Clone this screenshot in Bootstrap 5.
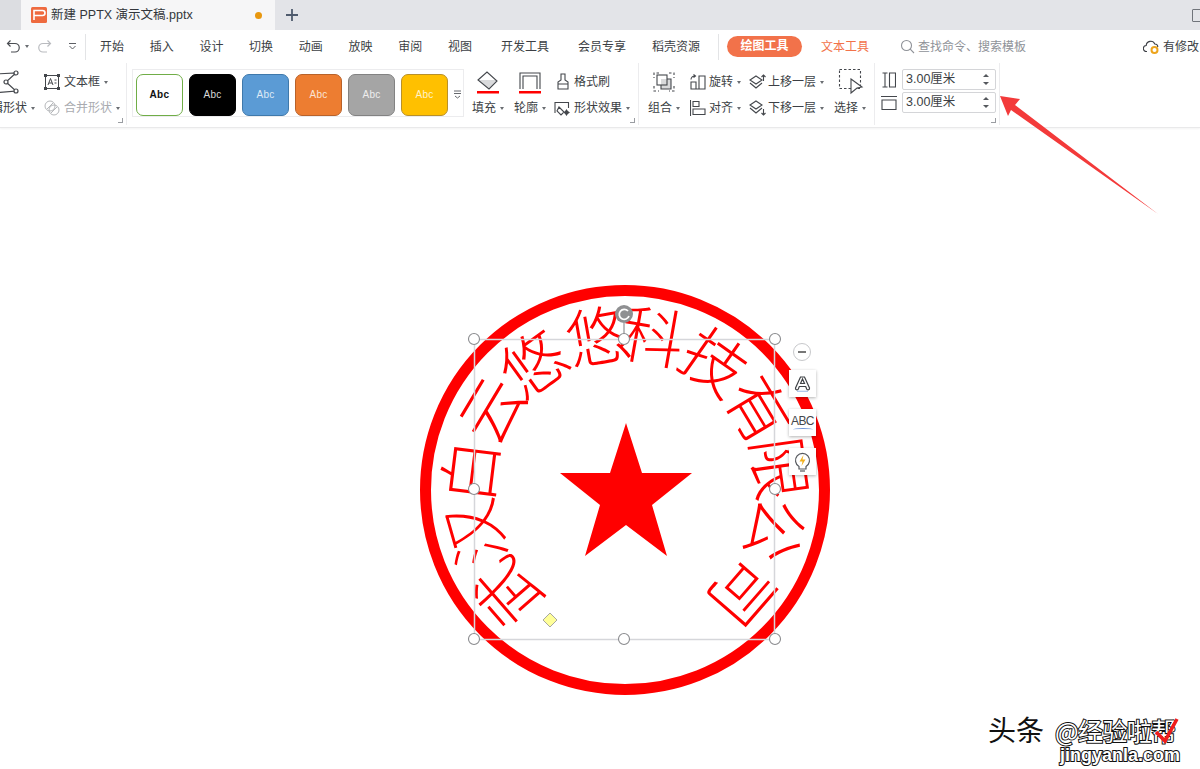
<!DOCTYPE html>
<html lang="zh-CN">
<head>
    <meta charset="UTF-8" />
    <title>新建 PPTX 演示文稿.pptx</title>
    <meta name="viewport" content="width=device-width, initial-scale=1.0" />
    <link href="https://cdn.jsdelivr.net/npm/bootstrap@5.3.0/dist/css/bootstrap.min.css" rel="stylesheet">
    <style>
        body {
            width: 1200px;
            height: 769px;
            overflow: hidden;
            background: #fff;
            color: #3c3f45;
            font-family: "Liberation Sans", "Noto Sans CJK SC", sans-serif;
            font-size: 12px;
            position: relative;
        }
        /* title bar */
        .tabbar { height: 30px; background: #e3e4e8; }
        .tab-stub { width: 21px; background: #dcdde1; }
        .doc-tab { width: 254px; background: #f6f6f7; padding-left: 10px; font-size: 12.5px; color: #33363b; gap: 4px; }
        .doc-dot { width: 7px; height: 7px; border-radius: 50%; background: #e8970f; margin-left: auto; margin-right: 13px; }
        .win-box { width: 14px; height: 13px; border: 1px solid #70747a; margin-left: auto; margin-right: -6px; border-radius: 1px; }
        .plus-btn { margin-left: 10px; }

        /* menu row */
        .menurow { height: 33px; padding-left: 6px; }
        .quick { width: 79px; }
        .sep-v { width: 1px; background: #e3e4e6; height: 26px; }
        .sep-pill { margin-left: 18px; }
        .menuitem { margin-left: 25.7px; white-space: nowrap; font-size: 12px; line-height: 1; }
        .menuitem.m-first { margin-left: 14px; }
        .menuitem.m-wide { margin-left: 29px; }
        .menuitem.m-mid { margin-left: 26px; }
        .pill-tool { background: #f2724a; color: #fff; font-weight: 700; width: 75px; height: 21px; border-radius: 11px; margin-left: 8px; line-height: 21px; text-align: center; }
        .menuitem.text-tool { color: #f2724a; margin-left: 19px; }
        .cmd-search { margin-left: 31px; color: #8f9298; gap: 3px; }
        .save-state { margin-left: auto; gap: 4px; margin-right: 1px; white-space: nowrap; }

        /* ribbon */
        .ribbon { height: 65px; border-bottom: 1px solid #e9e9ea; box-shadow: 0 1px 2px rgba(0, 0, 0, .05); position: relative; }
        .rgroup { position: relative; height: 62px; border-right: 1px solid #ececee; flex: none; }
        .launch { position: absolute; right: 3px; bottom: 2px; width: 5px; height: 5px; border-right: 1px solid #9a9da2; border-bottom: 1px solid #9a9da2; }
        .caret-d { display: inline-block; width: 0; height: 0; border-left: 2.5px solid transparent; border-right: 2.5px solid transparent; border-top: 3px solid #6a6d72; margin-left: 4px; vertical-align: middle; }
        .rstack { padding-top: 7px; gap: 2px; }
        .rline { height: 24px; white-space: nowrap; gap: 4px; }
        .rline-tight { gap: 3px; }
        .rline-up { gap: 2px; }
        .nudge-l { margin-left: -2px; }
        .muted-line { color: #a9abb0; }
        .g-shape { width: 127px; }
        .g-shape .col-a { width: 44px; margin-left: -21px; flex: none; }
        .g-shape .col-b { flex: none; margin-left: 21px; }
        .shape-ico { margin-left: 19px; }
        .g-gallery { width: 512px; }
        .gallery-box { width: 332px; height: 48px; margin: 6px 0 0 5px; border: 1px solid #ececee; padding: 4px 0 0 3px; gap: 6px; flex: none; }
        .swatch { width: 47px; height: 42px; border-radius: 7px; border: 1.5px solid; font-size: 10px; letter-spacing: .3px; text-align: center; line-height: 39px; flex: none; }
        .sw-white { background: #fff; border-color: #70ad47; color: #111; font-weight: 600; }
        .sw-black { background: #000; border-color: #000; color: #d8d8d8; }
        .sw-blue { background: #5b9bd5; border-color: #3f79ab; color: #dfeaf5; }
        .sw-orange { background: #ed7d31; border-color: #b8622a; color: #fbe4d4; }
        .sw-gray { background: #a5a5a5; border-color: #828282; color: #eee; }
        .sw-gold { background: #ffc000; border-color: #b8902a; color: #fff3cc; }
        .gallery-more { width: 17px; margin-left: -3px; height: 40px; }
        .stack-btn { width: 42px; flex: none; }
        .stack-btn.s-group { width: 42px; }
        .stack-btn .ico { height: 37px; }
        .stack-btn .lbl { line-height: 16px; white-space: nowrap; }
        .g-fill { padding-left: 8px; }
        .g-arrange { width: 236px; padding-left: 9px; }
        .arr-a { margin-right: 8px; }
        .arr-b { margin-right: 10px; }
        .g-size { width: 125px; padding: 5px 0 0 7px; }
        .size-row { height: 23px; gap: 6px; }
        .size-wide { margin: 0 -1px; }
        .size-field { width: 94px; height: 21px; border: 1px solid #d4d5d8; border-radius: 2px; padding: 0 0 0 3px; font-size: 12.5px; line-height: 19px; position: relative; }
        .spin-up, .spin-dn { position: absolute; right: 6px; width: 0; height: 0; border-left: 3px solid transparent; border-right: 3px solid transparent; }
        .spin-up { top: 4px; border-bottom: 3px solid #55585d; }
        .spin-dn { bottom: 4px; border-top: 3px solid #55585d; }

        /* slide area */
        .stage { position: relative; height: 641px; }
        .stage-svg { display: block; }
        .stamp-text { font-family: "Noto Sans CJK SC", sans-serif; font-size: 64px; fill: #f00; text-anchor: middle; font-weight: 300; }
        .float-tools { position: absolute; left: 789px; top: 215px; gap: 12px; }
        .float-minus { width: 18px; height: 18px; border-radius: 50%; border: 1px solid #c7c8cb; background: #fff; margin-left: 4px; margin-bottom: -3px; position: relative; }
        .float-minus::after { content: ""; position: absolute; left: 4px; right: 4px; top: 7px; height: 2px; background: #777; }
        .float-btn { width: 27px; height: 27px; background: #fff; box-shadow: 0 1px 3px rgba(0, 0, 0, .3); }
        .abc-mark { font-size: 12px; line-height: 13px; color: #44474c; letter-spacing: -.6px; }
        .abc-wave { display: block; width: 20px; height: 3px; border-top: 1px solid #6e94d8; border-radius: 50% 50% 0 0; }
        .wm-head { position: absolute; left: 988px; top: 584px; font-size: 28px; line-height: 34px; font-family: "Noto Sans CJK SC", sans-serif; color: #111; white-space: nowrap; }
        .wm-site { position: absolute; left: 1055px; top: 586px; font-size: 25px; line-height: 32px; color: #fff; -webkit-text-stroke: 2px #111; paint-order: stroke fill; white-space: nowrap; font-family: "Noto Sans CJK SC", sans-serif; letter-spacing: -.6px; }
        .wm-url { position: absolute; left: 1060px; top: 617px; font-size: 18px; line-height: 20px; font-weight: 700; color: #fff; -webkit-text-stroke: 2px #111; paint-order: stroke fill; white-space: nowrap; font-family: "Liberation Sans", sans-serif; }
        .wm-check { position: absolute; left: 1154px; top: 589px; }
        .call-arrow { position: absolute; left: 0; top: 0; pointer-events: none; }
        svg { flex: none; }
    </style>
</head>
<body>

<div class="tabbar d-flex">
    <div class="tab-stub"></div>
    <div class="doc-tab d-flex align-items-center">
        <svg width="16" height="16" viewBox="0 0 16 16"><rect width="16" height="16" rx="1.500" fill="#ee6a3f"/><path d="M3 13V3.500h8.500a2.500 2.500 0 0 1 0 5H3" fill="none" stroke="#fff" stroke-width="1.600"/></svg>
        <span>新建 PPTX 演示文稿.pptx</span>
        <span class="doc-dot"></span>
    </div>
    <div class="plus-btn d-flex align-items-center">
        <svg width="14" height="14" viewBox="0 0 14 14"><path d="M7 1v12M1 7h12" stroke="#4f5b6e" stroke-width="1.800"/></svg>
    </div>
    <div class="win-box align-self-center"></div>
</div>

<div class="menurow d-flex align-items-center">
    <div class="quick d-flex align-items-center">
        <svg width="15" height="15" viewBox="0 0 15 15" fill="none" stroke="#4a4d52" stroke-width="1.200"><path d="M4.500 1.500 1.500 4.500l3 3M1.500 4.500h7.500a4 4 0 0 1 0 8.500H5"/></svg>
        <span class="caret-d"></span>
        <svg class="ms-2" width="15" height="15" viewBox="0 0 15 15" fill="none" stroke="#b9bbbf" stroke-width="1.200"><path d="M10.500 1.500l3 3-3 3M13.500 4.500H6a4 4 0 0 0 0 8.500h4"/></svg>
        <svg class="ms-3" width="9" height="9" viewBox="0 0 9 9" fill="none" stroke="#5c5f64"><path d="M1 1.500h7M1.500 4l3 3 3-3"/></svg>
    </div>
    <div class="sep-v"></div>
    <span class="menuitem m-first">开始</span>
    <span class="menuitem">插入</span>
    <span class="menuitem">设计</span>
    <span class="menuitem">切换</span>
    <span class="menuitem">动画</span>
    <span class="menuitem">放映</span>
    <span class="menuitem">审阅</span>
    <span class="menuitem">视图</span>
    <span class="menuitem m-wide">开发工具</span>
    <span class="menuitem m-wide">会员专享</span>
    <span class="menuitem m-mid">稻壳资源</span>
    <div class="sep-v sep-pill"></div>
    <span class="pill-tool">绘图工具</span>
    <span class="menuitem text-tool">文本工具</span>
    <div class="cmd-search d-flex align-items-center">
        <svg width="15" height="15" viewBox="0 0 15 15" fill="none" stroke="#8f9298" stroke-width="1.100"><circle cx="6.500" cy="6.500" r="5"/><path d="M10.200 10.200 14 14"/></svg>
        <span>查找命令、搜索模板</span>
    </div>
    <div class="save-state d-flex align-items-center">
        <svg width="16" height="14" viewBox="0 0 16 14" fill="none"><path d="M4 11.500H3.500a3 3 0 0 1-.300-6A4.500 4.500 0 0 1 11.800 4a3 3 0 0 1 3 3" stroke="#3c3f45" stroke-width="1.100"/><circle cx="11.500" cy="10" r="3" stroke="#eda41c" stroke-width="2"/></svg>
        <span>有修改</span>
    </div>
</div>

<div class="ribbon d-flex">
    <!-- shape group, cut off by the window's left edge -->
    <div class="rgroup g-shape d-flex">
        <div class="col-a rstack d-flex flex-column">
            <div class="rline d-flex align-items-center">
                <svg class="shape-ico" width="24" height="24" viewBox="0 0 24 24" fill="none" stroke="#44474c" stroke-width="1.200"><path d="M-4 4 18 3 8 12l10 9L-4 23"/><circle cx="18" cy="3" r="2" fill="#fff"/><circle cx="8" cy="12" r="2" fill="#fff"/><circle cx="18" cy="21" r="2" fill="#fff"/></svg>
            </div>
            <div class="rline d-flex align-items-center"><span>编辑形状<span class="caret-d"></span></span></div>
        </div>
        <div class="col-b rstack d-flex flex-column">
            <div class="rline d-flex align-items-center">
                <svg width="16" height="16" viewBox="0 0 16 16" fill="none" stroke="#44474c"><rect x="1.500" y="1.500" width="13" height="13"/><rect x=".5" y=".5" width="2" height="2" fill="#44474c"/><rect x="13.500" y=".5" width="2" height="2" fill="#44474c"/><rect x=".5" y="13.500" width="2" height="2" fill="#44474c"/><rect x="13.500" y="13.500" width="2" height="2" fill="#44474c"/><path d="M4 11 6.500 4.500 9 11M5 9h3M10.500 6h2M10.500 9h2"/></svg>
                <span>文本框<span class="caret-d"></span></span>
            </div>
            <div class="rline d-flex align-items-center muted-line">
                <svg width="16" height="16" viewBox="0 0 16 16" fill="none" stroke="#b5b7ba"><circle cx="6" cy="6" r="5"/><circle cx="10" cy="10" r="5"/><path d="M3 9l6-6M7 13l6-6"/></svg>
                <span>合并形状<span class="caret-d"></span></span>
            </div>
        </div>
        <span class="launch"></span>
    </div>

    <div class="rgroup g-gallery d-flex">
        <div class="gallery-box d-flex align-items-start">
            <div class="swatch sw-white">Abc</div>
            <div class="swatch sw-black">Abc</div>
            <div class="swatch sw-blue">Abc</div>
            <div class="swatch sw-orange">Abc</div>
            <div class="swatch sw-gray">Abc</div>
            <div class="swatch sw-gold">Abc</div>
            <div class="gallery-more d-flex justify-content-center align-items-center">
                <svg width="7" height="9" viewBox="0 0 7 9" fill="none" stroke="#66696e"><path d="M0 1h7M0 3.500h7M1 6l2.500 2L6 6"/></svg>
            </div>
        </div>
        <div class="g-fill d-flex">
            <div class="stack-btn">
                <div class="ico d-flex align-items-center ps-1">
                    <svg width="24" height="26" viewBox="0 0 24 26" fill="none" stroke="#44474c" stroke-width="1.100"><path d="M2 11h19l-8 8z" fill="#d9dadc" stroke="none"/><path d="M2 11 11 3l10 9-8 8z"/><rect x="1" y="22" width="22" height="2.500" fill="#f00" stroke="none"/></svg>
                </div>
                <div class="lbl">填充<span class="caret-d"></span></div>
            </div>
            <div class="stack-btn">
                <div class="ico d-flex align-items-center ps-1">
                    <svg width="24" height="26" viewBox="0 0 24 26" fill="none" stroke="#44474c" stroke-width="1.100"><path d="M2 20V4h20v16M5 20V7h14v13"/><rect x="1" y="22" width="22" height="2.500" fill="#f00" stroke="none"/></svg>
                </div>
                <div class="lbl">轮廓<span class="caret-d"></span></div>
            </div>
            <div class="rstack d-flex flex-column">
                <div class="rline d-flex align-items-center">
                    <svg width="14" height="18" viewBox="0 0 14 18" fill="none" stroke="#44474c" stroke-width="1.100"><path d="M5 1h4v6l3 2v7H2V9l3-2zM2 11h10"/></svg>
                    <span>格式刷</span>
                </div>
                <div class="rline d-flex align-items-center">
                    <svg class="nudge-l" width="16" height="15" viewBox="0 0 16 15" fill="none" stroke="#44474c" stroke-width="1.100"><path d="M1 12V1.500h13.500V7M5 6l5 5-3 3-4-4z"/><path d="M12.500 9l1 1.500 1.500 1-1.500 1-1 1.500-1-1.500-1-1 1-1z" fill="#44474c"/></svg>
                    <span>形状效果<span class="caret-d"></span></span>
                </div>
            </div>
        </div>
        <span class="launch"></span>
    </div>

    <div class="rgroup g-arrange d-flex">
        <div class="stack-btn s-group">
            <div class="ico d-flex align-items-center ps-1">
                <svg width="24" height="24" viewBox="0 0 24 24" fill="none" stroke="#44474c" stroke-width="1.100"><path d="M7 3H2v5M17 3h5v5M2 16v5h5M22 16v5h-5" stroke-dasharray="2.500 2"/><rect x="9" y="9" width="10" height="10" fill="#d9dadc" stroke="none"/><rect x="5" y="5" width="10" height="10"/><path d="M15 9h4v10H9v-4"/></svg>
            </div>
            <div class="lbl">组合<span class="caret-d"></span></div>
        </div>
        <div class="arr-a rstack d-flex flex-column">
            <div class="rline rline-tight d-flex align-items-center">
                <svg width="16" height="16" viewBox="0 0 16 16" fill="none" stroke="#44474c" stroke-width="1.100"><path d="M1 15V8h5v7zM9 15V2h6v13zM6 15h3M1 5.500A3.500 3.500 0 0 1 5 2M3.500 .5 5.500 2 3.500 3.500"/></svg>
                <span>旋转<span class="caret-d"></span></span>
            </div>
            <div class="rline rline-tight d-flex align-items-center">
                <svg width="16" height="16" viewBox="0 0 16 16" fill="none" stroke="#44474c" stroke-width="1.100"><path d="M.5 0v16M3 1.500h6v5H3zM3 9h12v5.500H3z"/></svg>
                <span>对齐<span class="caret-d"></span></span>
            </div>
        </div>
        <div class="arr-b rstack d-flex flex-column">
            <div class="rline rline-up d-flex align-items-center">
                <svg width="17" height="16" viewBox="0 0 17 16" fill="none" stroke="#44474c" stroke-width="1.100"><path d="M7 2 13 6 7 10 1 6zM1 9l6 5 6-5M14.500 7V1M12.500 3l2-2 2 2"/></svg>
                <span>上移一层<span class="caret-d"></span></span>
            </div>
            <div class="rline rline-up d-flex align-items-center">
                <svg width="17" height="16" viewBox="0 0 17 16" fill="none" stroke="#44474c" stroke-width="1.100"><path d="M7 1 13 5 7 9 1 5zM1 8l6 5 6-5M14.500 9v6M12.500 13l2 2 2-2"/></svg>
                <span>下移一层<span class="caret-d"></span></span>
            </div>
        </div>
        <div class="stack-btn">
            <div class="ico d-flex align-items-center ps-1">
                <svg width="26" height="27" viewBox="0 0 26 27" fill="none" stroke="#44474c" stroke-width="1.100"><rect x="1.500" y="1.500" width="21" height="19" stroke-dasharray="2.500 2"/><path d="M13 11l11 8-5 1-6 5z" fill="#fff"/></svg>
            </div>
            <div class="lbl">选择<span class="caret-d"></span></div>
        </div>
    </div>

    <div class="rgroup g-size">
        <div class="size-row d-flex align-items-center">
            <svg width="14" height="16" viewBox="0 0 14 16" fill="none" stroke="#44474c" stroke-width="1.100"><path d="M.5 1h5M3 1v14M.5 15h5M7.500 1h6v14h-6z"/></svg>
            <div class="size-field">3.00厘米<span class="spin-up"></span><span class="spin-dn"></span></div>
        </div>
        <div class="size-row d-flex align-items-center">
            <svg class="size-wide" width="16" height="14" viewBox="0 0 16 14" fill="none" stroke="#44474c" stroke-width="1.100"><path d="M0 .5h16M1 4h14v9.500H1z"/></svg>
            <div class="size-field">3.00厘米<span class="spin-up"></span><span class="spin-dn"></span></div>
        </div>
        <span class="launch"></span>
    </div>
</div>

<div class="stage">
    <svg class="stage-svg" width="1200" height="641" viewBox="0 128 1200 641">
        <circle cx="625" cy="490" r="199.500" fill="none" stroke="#f00" stroke-width="11"/>
        <polygon fill="#f00" points="626,423 642,473 692,473 652,505 667,556 626,525 585,556 600,505 560,473 610,473"/>
        <g id="stamp-chars"></g>
        <rect x="474.500" y="339.500" width="300" height="300" fill="none" stroke="#d5d6da" stroke-width="1.500"/>
        <path d="M624 323v16" stroke="#a6a7aa" stroke-width="1.500"/>
        <g fill="#fff" stroke="#8a8b8e" stroke-width="1.100">
            <circle cx="474" cy="339" r="5.500"/><circle cx="624" cy="339" r="5.500"/><circle cx="775" cy="339" r="5.500"/>
            <circle cx="474" cy="489" r="5.500"/><circle cx="775" cy="489" r="5.500"/>
            <circle cx="474" cy="639" r="5.500"/><circle cx="624" cy="639" r="5.500"/><circle cx="775" cy="639" r="5.500"/>
        </g>
        <circle cx="624" cy="314" r="9" fill="#8f9092"/>
        <path d="M628 311a5 5 0 1 0 1 5" fill="none" stroke="#fff" stroke-width="1.800"/>
        <path d="M550 613l7 7-7 7-7-7z" fill="#ffff99" stroke="#a8a8a0"/>
    </svg>

    <div class="float-tools d-flex flex-column">
        <div class="float-minus"></div>
        <div class="float-btn d-flex align-items-center justify-content-center">
            <svg width="17" height="17" viewBox="0 0 17 17" fill="none" stroke="#3f4246" stroke-width="1.200"><path d="M1.500 13 6.500 2h4l5 11a1.500 1.500 0 0 1-2.800 1l-1-2.500H5.300l-1 2.500a1.500 1.500 0 0 1-2.800-1zM6.500 8.500 8.500 4l2 4.500z"/><path d="M3 16.300h11" stroke="#a9c2ea"/></svg>
        </div>
        <div class="float-btn d-flex flex-column align-items-center justify-content-center">
            <span class="abc-mark">ABC</span>
            <span class="abc-wave"></span>
        </div>
        <div class="float-btn d-flex align-items-center justify-content-center">
            <svg width="17" height="20" viewBox="0 0 17 20" fill="none"><path d="M5 14.500a7 7 0 1 1 7 0V17H5z" stroke="#55585d" stroke-width="1.200"/><path d="M9.500 3 5.500 9.500h3L7.500 14l4-6.500h-3z" fill="#f2b01e"/><path d="M6 19h5" stroke="#55585d" stroke-width="1.200"/></svg>
        </div>
    </div>

    <div class="wm-head">头条</div>
    <div class="wm-site">@经验啦帮</div>
    <div class="wm-url">jingyanla.com</div>
    <svg class="wm-check" width="26" height="28" viewBox="0 0 26 28"><path d="M2 15 11 24 23 2" fill="none" stroke="#f01c1c" stroke-width="3.500"/></svg>
</div>

<svg class="call-arrow" width="1200" height="769" viewBox="0 0 1200 769">
    <polygon fill="#f33a3a" points="1000,96 1020,99 1015,105 1158,214 1011,110 1008,116"/>
</svg>

<script src="https://cdn.jsdelivr.net/npm/bootstrap@5.3.0/dist/js/bootstrap.bundle.min.js"></script>
<script>
    // seal characters laid out around the ring: [char, angle from top]
    const sealChars = [
        ['武', -131], ['汉', -106], ['白', -83], ['云', -59], ['悠', -36], ['悠', -10],
        ['科', 10], ['技', 35], ['有', 59], ['限', 82], ['公', 105], ['司', 131]
    ];
    const holder = document.getElementById('stamp-chars');
    sealChars.forEach(([ch, deg]) => {
        const t = document.createElementNS('http://www.w3.org/2000/svg', 'text');
        t.setAttribute('class', 'stamp-text');
        t.setAttribute('transform', `rotate(${deg} 625 490) translate(625 358)`);
        t.textContent = ch;
        holder.appendChild(t);
    });
</script>
</body>
</html>
